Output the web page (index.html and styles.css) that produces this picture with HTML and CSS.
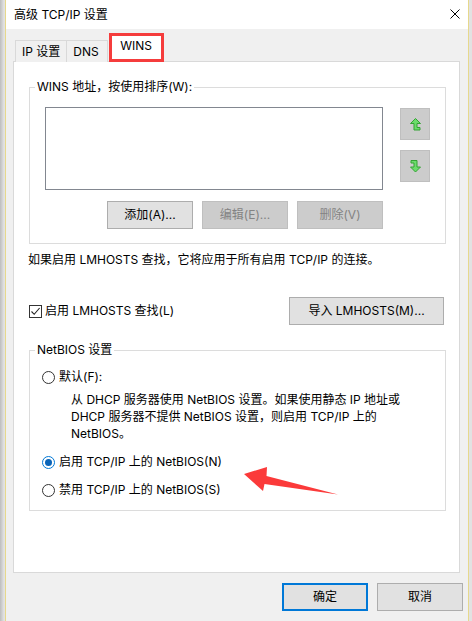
FILE: index.html
```html
<!DOCTYPE html>
<html lang="zh-CN">
<head>
<meta charset="utf-8">
<title>高级 TCP/IP 设置</title>
<link rel="stylesheet" href="styles.css">
</head>
<body>
<div class="screen">
  <div class="dialog">
    <div class="titlebar">
      <span class="title">高级 TCP/IP 设置</span>
      <svg class="close" width="10" height="10" viewBox="0 0 10 10"><path d="M0.5 0.5 L9.5 9.5 M9.5 0.5 L0.5 9.5" stroke="#000" stroke-width="1" fill="none"/></svg>
    </div>
    <div class="client">
      <div class="tabs">
        <div class="tab tab-ip">IP 设置</div>
        <div class="tab tab-dns">DNS</div>
        <div class="tab tab-active">WINS</div>
      </div>
      <div class="panel">
        <div class="group group-wins">
          <div class="legend">WINS 地址，按使用排序(W):</div>
          <div class="list-row">
            <div class="listbox"></div>
            <div class="order-btns">
              <div class="icon-btn">
                <svg width="11" height="13" viewBox="0 0 11 13"><path d="M5.5 0.5 L10.5 5.5 L7 5.5 L7 9.5 L10 9.5 L10 12 L4 12 L4 5.5 L0.5 5.5 Z" fill="#6cdc6c" stroke="#35a235" stroke-width="1" stroke-linejoin="miter"/></svg>
              </div>
              <div class="icon-btn">
                <svg width="11" height="13" viewBox="0 0 11 13"><path d="M1 0.5 L7 0.5 L7 7 L10.5 7 L5.5 12 L0.5 7 L4 7 L4 3 L1 3 Z" fill="#6cdc6c" stroke="#35a235" stroke-width="1" stroke-linejoin="miter"/></svg>
              </div>
            </div>
          </div>
          <div class="btn-row">
            <div class="btn btn-sm">添加(A)...</div>
            <div class="btn btn-sm disabled">编辑(E)...</div>
            <div class="btn btn-sm disabled">删除(V)</div>
          </div>
        </div>
        <p class="note">如果启用 LMHOSTS 查找，它将应用于所有启用 TCP/IP 的连接。</p>
        <div class="lm-row">
          <div class="check">
            <span class="checkbox"><svg width="11" height="11" viewBox="0 0 11 11"><path d="M1.5 5.5 L4.2 8.3 L9.6 2" stroke="#222" stroke-width="1.1" fill="none"/></svg></span>
            <span>启用 LMHOSTS 查找(L)</span>
          </div>
          <div class="btn btn-import">导入 LMHOSTS(M)...</div>
        </div>
        <div class="group group-netbios">
          <div class="legend">NetBIOS 设置</div>
          <div class="radio radio-first"><span class="radio-dot"></span><span>默认(F):</span></div>
          <p class="desc">从 DHCP 服务器使用 NetBIOS 设置。如果使用静态 IP 地址或<br>DHCP 服务器不提供 NetBIOS 设置，则启用 TCP/IP 上的<br>NetBIOS。</p>
          <div class="radio radio-next"><span class="radio-dot on"></span><span>启用 TCP/IP 上的 NetBIOS(N)</span></div>
          <div class="radio radio-next"><span class="radio-dot"></span><span>禁用 TCP/IP 上的 NetBIOS(S)</span></div>
        </div>
      </div>
      <div class="footer">
        <div class="btn btn-ok">确定</div>
        <div class="btn btn-cancel">取消</div>
      </div>
    </div>
  </div>
  <svg class="annot" width="472" height="621" viewBox="0 0 472 621">
    <polygon points="244,474 267,467 266.5,476 338,494.5 264.5,484 263,491" fill="#fb3a3a"/>
  </svg>
</div>
</body>
</html>
```
FILE: styles.css
```css
* { box-sizing: border-box; }
html, body { margin: 0; padding: 0; }
body {
  font-family: Inter, "Noto Sans CJK SC", sans-serif;
  font-size: 12px;
  line-height: 16px;
  color: #000;
}
.screen {
  position: relative;
  width: 472px;
  height: 621px;
  overflow: hidden;
  display: flex;
  background: linear-gradient(to right, #bdbdbd 0, #e2e2e2 4px, #e2e2e2 100%);
}
.dialog {
  margin-left: 5px;
  width: 464px;
  height: 621px;
  display: flex;
  flex-direction: column;
  border-left: 1px solid #e6d88c;
  border-right: 1px solid #e6d88c;
  background: #f0f0f0;
}
.titlebar {
  height: 29px;
  flex: none;
  background: #fff;
  display: flex;
  align-items: center;
  padding-left: 8px;
  padding-right: 8px;
}
.title { font-size: 12px; }
.close { margin-left: auto; margin-top: -1px; }
.client {
  flex: 1;
  background: #f0f0f0;
  display: flex;
  flex-direction: column;
}
.tabs {
  margin-top: 4px;
  height: 29px;
  margin-bottom: -1px;
  display: flex;
  align-items: flex-end;
  padding-left: 9px;
  position: relative;
  z-index: 1;
}
.tab {
  height: 22px;
  border: 1px solid #d9d9d9;
  border-bottom: none;
  background: #f0f0f0;
  display: flex;
  align-items: center;
  padding: 1px 6px 0 6px;
}
.tab-dns { border-left: none; padding-right: 8px; }
.tab-active {
  margin-left: 1px;
  height: 29px;
  width: 55px;
  border: 3px solid #f53c3c;
  background: #fff;
  justify-content: center;
  padding: 0 0 3px 0;
}
.panel {
  margin-left: 7px;
  width: 447px;
  height: 512px;
  flex: none;
  border: 1px solid #d9d9d9;
  background: #fff;
  padding-left: 15px;
  display: flex;
  flex-direction: column;
}
.group {
  width: 417px;
  border: 1px solid #dcdcdc;
  display: flex;
  flex-direction: column;
}
.group-wins {
  margin-top: 25px;
  height: 157px;
}
.legend {
  margin-top: -9px;
  margin-left: 5px;
  padding: 0 2px;
  background: #fff;
  align-self: flex-start;
  height: 16px;
}
.list-row {
  display: flex;
  margin-top: 12px;
  padding-left: 15px;
}
.listbox {
  width: 338px;
  height: 83px;
  border: 1px solid #828790;
  background: #fff;
}
.order-btns {
  margin-left: 17px;
  margin-top: 1px;
  display: flex;
  flex-direction: column;
  gap: 10px;
}
.icon-btn {
  width: 30px;
  height: 32px;
  background: #cccccc;
  border: 1px solid #bfbfbf;
  display: flex;
  align-items: center;
  justify-content: center;
}
.btn-row {
  display: flex;
  margin-top: 11px;
  padding-left: 77px;
  gap: 9px;
}
.btn {
  height: 28px;
  background: #e1e1e1;
  border: 1px solid #adadad;
  display: flex;
  align-items: center;
  justify-content: center;
}
.btn-sm { width: 86px; }
.btn.disabled {
  background: #cccccc;
  border-color: #bfbfbf;
  color: #838383;
}
.note {
  margin: 8px 0 0 -1px;
  height: 16px;
}
.lm-row {
  margin-top: 29px;
  width: 415px;
  display: flex;
  align-items: center;
  justify-content: space-between;
}
.check {
  display: flex;
  align-items: center;
  gap: 3px;
}
.checkbox {
  width: 13px;
  height: 13px;
  border: 1px solid #333;
  background: #fff;
  display: flex;
  align-items: center;
  justify-content: center;
}
.btn-import { width: 155px; }
.group-netbios {
  margin-top: 25px;
  height: 161px;
  padding-left: 12px;
}
.group-netbios .legend { margin-left: -7px; }
.radio {
  display: flex;
  align-items: center;
  gap: 4px;
  height: 16px;
}
.radio-first { margin-top: 11px; }
.radio-next { margin-top: 12px; }
.radio-dot {
  width: 13px;
  height: 13px;
  border: 1px solid #333;
  border-radius: 50%;
  background: #fff;
  display: flex;
  align-items: center;
  justify-content: center;
}
.radio-dot.on { border-color: #0078d7; }
.radio-dot.on::after {
  content: "";
  width: 7px;
  height: 7px;
  border-radius: 50%;
  background: #0a64b8;
}
.desc {
  margin: 6px 0 0 29px;
  line-height: 17px;
}
.footer {
  margin-top: 10px;
  display: flex;
  justify-content: flex-end;
  gap: 9px;
  padding-right: 5px;
}
.btn-ok, .btn-cancel { width: 86px; }
.btn-ok { border: 2px solid #0078d7; }
.annot {
  position: absolute;
  left: 0;
  top: 0;
  pointer-events: none;
}
```
